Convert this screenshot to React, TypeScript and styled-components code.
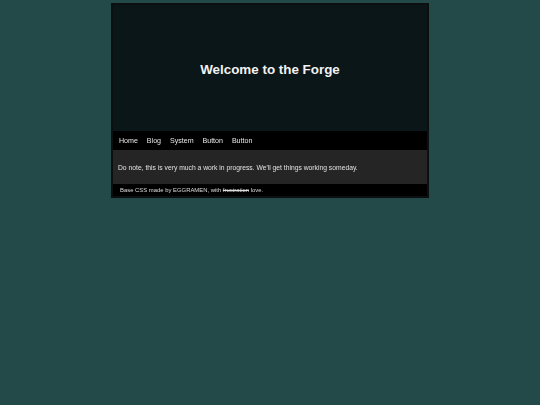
import { createGlobalStyle } from "styled-components";
import styled from "styled-components";

const GlobalStyle = createGlobalStyle`
	html, body {
		margin: 0;
		padding: 0;
		background-color: #234949;
		font-family: "Liberation Sans", Arial, sans-serif;
	}
`;

const Page = styled.div`
	min-height: 405px;
	padding-top: 3px;
	display: flex;
	justify-content: center;
	align-items: flex-start;
`;

const Frame = styled.div`
	width: 314px;
	border: 2px solid #0c0f10;
	display: flex;
	flex-direction: column;
`;

const Header = styled.header`
	height: 126px;
	background-color: #0b1618;
	display: flex;
	align-items: center;
	justify-content: center;
`;

const Title = styled.h1`
	margin: 0;
	color: #f2f2f2;
	font-size: 13.4px;
	font-weight: bold;
	line-height: 1;
	position: relative;
	top: 2px;
`;

// the grey bars hold tiny text; grayscale keeps it from colour fringing
const Nav = styled.nav`
	height: 19px;
	background-color: #000;
	display: flex;
	align-items: center;
	gap: 8.9px;
	padding-left: 6px;
	filter: grayscale(1);
`;

const NavLink = styled.a`
	color: #e6e6e6;
	font-size: 7.1px;
	text-decoration: none;
	cursor: pointer;
`;

const Notice = styled.section`
	height: 34px;
	background-color: #252525;
	display: flex;
	align-items: center;
	padding-left: 5px;
	color: #e0e0e0;
	font-size: 6.75px;
	filter: grayscale(1);
`;

const Footer = styled.footer`
	height: 12px;
	background-color: #000;
	display: flex;
	align-items: center;
	padding-left: 7px;
	color: #dcdcdc;
	font-size: 5.9px;
	filter: grayscale(1);
`;

const links = ["Home", "Blog", "System", "Button", "Button"];

export default function App() {
	return (
		<>
			<GlobalStyle />
			<Page>
				<Frame>
					<Header>
						<Title>Welcome to the Forge</Title>
					</Header>
					<Nav>
						{links.map((label, i) => (
							<NavLink key={i}>{label}</NavLink>
						))}
					</Nav>
					<Notice>Do note, this is very much a work in progress. We'll get things working someday.</Notice>
					<Footer>
						<span>
							Base CSS made by EGGRAMEN, with <s>frustration</s> love.
						</span>
					</Footer>
				</Frame>
			</Page>
		</>
	);
}
